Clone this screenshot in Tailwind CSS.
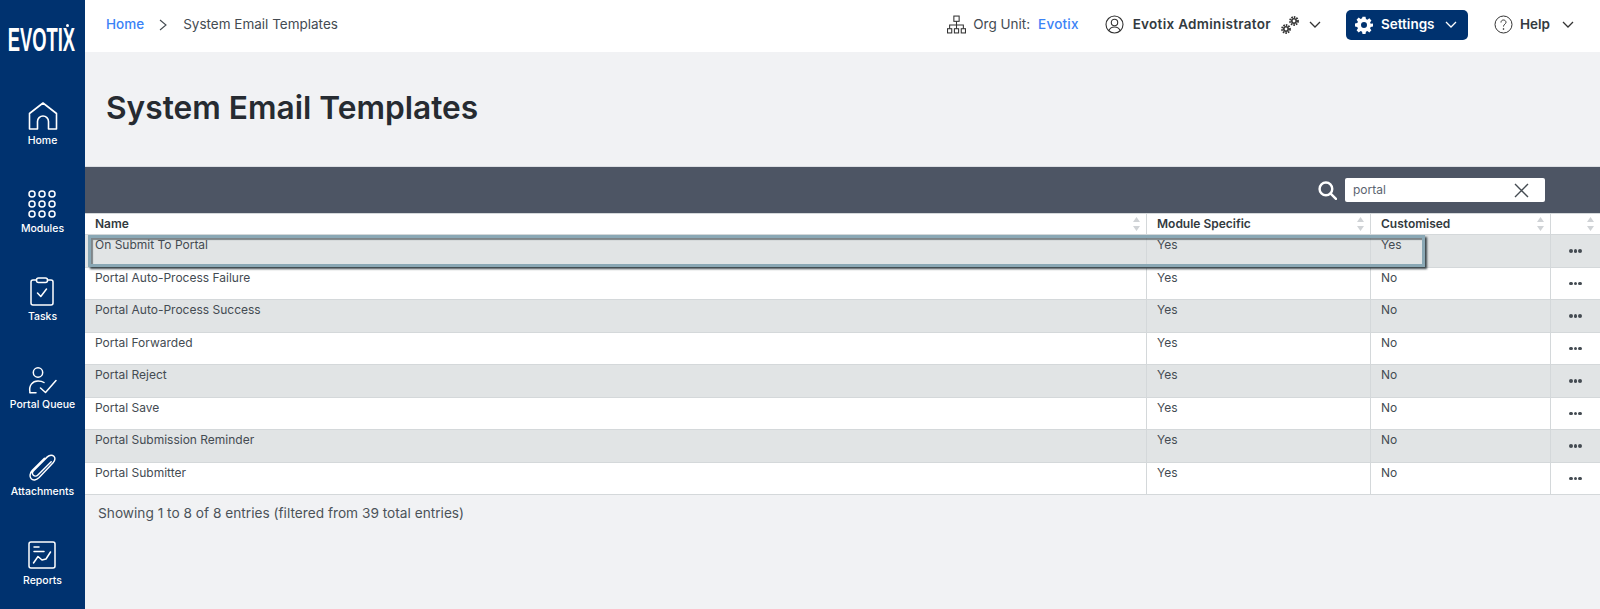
<!DOCTYPE html>
<html lang="en">
<head>
  <meta charset="UTF-8" />
  <meta name="viewport" content="width=device-width, initial-scale=1.0" />
  <title>System Email Templates</title>
  <script src="https://cdn.jsdelivr.net/npm/@tailwindcss/browser@4"></script>
</head>
<body class="bg-[#f1f2f4] font-['Inter',sans-serif] text-[#444b52] h-[609px] overflow-hidden flex">

  <!-- sidebar -->
  <aside class="w-[85px] h-[609px] shrink-0 bg-[#00326f] text-white flex flex-col items-center overflow-hidden">
    <div class="relative h-[95px] w-full shrink-0 flex justify-center pt-[17px]">
      <span class="font-['Liberation_Sans',sans-serif] font-bold text-[34px] leading-[44px] scale-x-[.54] whitespace-nowrap -translate-x-[1px]">EVOTIX</span>
      <span class="absolute left-[66px] top-[24px] w-[3px] h-[3px] rounded-full bg-white"></span>
    </div>

    <a class="h-[88px] shrink-0 flex flex-col items-center">
      <svg class="w-[30px] h-[28px] mt-[7px]" viewBox="0 0 30 28" fill="none" stroke="white" stroke-width="1.600" stroke-linejoin="round"><path d="M1.500 11.500 15 1 28.500 11.500V27H20.500V19.500A5.500 5.500 0 0 0 9.500 19.500V27H1.500Z"/></svg>
      <span class="text-[10.5px] leading-[14px] mt-[4px] font-medium">Home</span>
    </a>
    <a class="h-[88px] shrink-0 flex flex-col items-center">
      <svg class="w-[28px] h-[28px] mt-[7px]" viewBox="0 0 28 28" fill="none" stroke="white" stroke-width="1.500">
        <circle cx="4" cy="4" r="3"/><circle cx="14" cy="4" r="3"/><circle cx="24" cy="4" r="3"/>
        <circle cx="4" cy="14" r="3"/><circle cx="14" cy="14" r="3"/><circle cx="24" cy="14" r="3"/>
        <circle cx="4" cy="24" r="3"/><circle cx="14" cy="24" r="3"/><circle cx="24" cy="24" r="3"/>
      </svg>
      <span class="text-[10.5px] leading-[14px] mt-[4px] font-medium">Modules</span>
    </a>
    <a class="h-[88px] shrink-0 flex flex-col items-center">
      <svg class="w-[24px] h-[29px] mt-[6px]" viewBox="0 0 24 29" fill="none" stroke="white" stroke-width="1.500" stroke-linejoin="round" stroke-linecap="round"><path d="M6.500 3H3a2 2 0 0 0-2 2V26a2 2 0 0 0 2 2H21a2 2 0 0 0 2-2V5a2 2 0 0 0-2-2H17.500"/><rect x="6.500" y="1" width="11" height="4.500" rx="2"/><path d="M7.500 16 10.800 19.500 16.500 12"/></svg>
      <span class="text-[10.5px] leading-[14px] mt-[4px] font-medium">Tasks</span>
    </a>
    <a class="h-[88px] shrink-0 flex flex-col items-center">
      <svg class="w-[29px] h-[27px] mt-[8px]" viewBox="0 0 29 27" fill="none" stroke="white" stroke-width="1.500" stroke-linecap="round" stroke-linejoin="round"><circle cx="10" cy="5.500" r="4.700"/><path d="M2 25.500C0.500 18.500 4.500 14 10 14C12.500 14 14.500 14.500 16 15.500"/><path d="M2 25.800H8"/><path d="M12.500 21 17.500 25.500 28 13.500"/></svg>
      <span class="text-[10.5px] leading-[14px] mt-[4px] font-medium whitespace-nowrap">Portal Queue</span>
    </a>
    <a class="h-[88px] shrink-0 flex flex-col items-center">
      <svg class="w-[27px] h-[28px] mt-[6px]" viewBox="0 0 28 29" fill="none" stroke="white" stroke-width="1.500" stroke-linecap="round" stroke-linejoin="round"><path d="M23 9 9.500 22.500C7.500 24.500 5.500 24 4.500 23C3.500 22 3 20 5 18L19 4C21.500 1.500 24.500 2 25.800 3.300C27.200 4.700 27.500 7.500 25 10L10.500 25.500C7.500 28.500 4 28.500 2.300 26.800C0.500 25 0.500 21 3.500 18L16 5.500"/></svg>
      <span class="text-[10.5px] leading-[14px] mt-[4px] font-medium">Attachments</span>
    </a>
    <a class="h-[88px] shrink-0 flex flex-col items-center">
      <svg class="w-[28px] h-[28px] mt-[6px]" viewBox="0 0 28 28" fill="none" stroke="white" stroke-width="1.500" stroke-linecap="round" stroke-linejoin="round"><rect x="1" y="1" width="26" height="26" rx="2"/><path d="M6 6H11"/><path d="M6 10.500H16"/><path d="M5.500 22 10 15.500 14 19 18 18 22.500 11"/></svg>
      <span class="text-[10.5px] leading-[14px] mt-[5px] font-medium">Reports</span>
    </a>
  </aside>

  <div class="flex-1 min-w-0 relative">
    <!-- top bar -->
    <header class="h-[52px] bg-white flex items-center pl-[21px] pb-[3px] text-[13.5px]">
      <a class="text-[#3b82f6] font-medium">Home</a>
      <svg class="w-[8px] h-[12px] ml-[15px] mr-[16px]" viewBox="0 0 8 12" fill="none" stroke="#444b52" stroke-width="1.100"><path d="M1 1 7 6 1 11"/></svg>
      <span class="text-[#444b52]">System Email Templates</span>

      <div class="ml-auto flex items-center">
        <svg class="w-[19px] h-[19px]" viewBox="0 0 18 18" fill="none" stroke="#333" stroke-width="1"><rect x="6.500" y="1" width="5" height="5"/><path d="M9 6V9.500M2.500 13V9.500H15.500V13M9 9.500V13"/><rect x="0.500" y="13" width="4" height="4"/><rect x="7" y="13" width="4" height="4"/><rect x="13.500" y="13" width="4" height="4"/></svg>
        <span class="ml-[7px] text-[#444b52]">Org Unit:</span>
        <span class="ml-[8px] text-[#3b82f6] font-medium tracking-[.2px]">Evotix</span>

        <svg class="w-[19px] h-[19px] ml-[26px]" viewBox="0 0 19 19" fill="none" stroke="#333" stroke-width="1.100"><circle cx="9.500" cy="9.500" r="8.500"/><circle cx="9.500" cy="7.500" r="3.200"/><path d="M4 15.500C5 12.800 7 12 9.500 12S14 12.800 15 15.500"/></svg>
        <span class="ml-[9px] font-semibold text-[#333a40] tracking-[.3px]">Evotix Administrator</span>
        <svg class="w-[18px] h-[18px] ml-[10px]" viewBox="0 0 18 18" fill="none" stroke="#333"><circle cx="5" cy="13" r="2.200" stroke-width="1.600"/><circle cx="5" cy="13" r="4" stroke-width="1.800" stroke-dasharray="1.600 1"/><circle cx="13" cy="5" r="2.200" stroke-width="1.600"/><circle cx="13" cy="5" r="4" stroke-width="1.800" stroke-dasharray="1.600 1"/></svg>
        <svg class="w-[12px] h-[7px] ml-[10px]" viewBox="0 0 12 7" fill="none" stroke="#333" stroke-width="1.300"><path d="M1 1 6 6 11 1"/></svg>

        <button class="ml-[25px] w-[122px] h-[30px] rounded-[5px] bg-[#00326f] text-white flex items-center pl-[9px]">
          <svg class="w-[18px] h-[18px]" viewBox="0 0 24 24" fill="white"><path fill-rule="evenodd" d="M10 1h4l.6 3.100 1.900.8 2.600-1.800 2.800 2.800-1.800 2.600.8 1.900L24 10v4l-3.100.6-.8 1.900 1.800 2.600-2.800 2.800-2.600-1.800-1.900.8L14 24h-4l-.6-3.100-1.900-.8-2.600 1.800-2.800-2.800 1.800-2.600-.8-1.900L0 14v-4l3.100-.6.8-1.900-1.800-2.600 2.800-2.800 2.600 1.800 1.900-.8zM12 8a4 4 0 1 0 0 8 4 4 0 0 0 0-8z"/></svg>
          <span class="ml-[8px] font-semibold">Settings</span>
          <svg class="w-[12px] h-[7px] ml-[10px]" viewBox="0 0 12 7" fill="none" stroke="white" stroke-width="1.300"><path d="M1 1 6 6 11 1"/></svg>
        </button>

        <svg class="w-[19px] h-[19px] ml-[26px]" viewBox="0 0 19 19" fill="none" stroke="#333" stroke-width="1"><circle cx="9.500" cy="9.500" r="8.500"/><path d="M7 7.500C7 5.800 8.200 5 9.500 5S12 6 12 7.300C12 9 9.500 9.300 9.500 11.500"/><circle cx="9.500" cy="14" r=".5"/></svg>
        <span class="ml-[7px] font-semibold text-[#333a40]">Help</span>
        <svg class="w-[12px] h-[7px] ml-[12px] mr-[26px]" viewBox="0 0 12 7" fill="none" stroke="#333" stroke-width="1.300"><path d="M1 1 6 6 11 1"/></svg>
      </div>
    </header>

    <!-- title -->
    <div class="h-[115px] pl-[21px] pt-[37px] border-b border-[#dcdfe3]">
      <h1 class="text-[31.700px] leading-[38px] font-semibold text-[#262b31]">System Email Templates</h1>
    </div>

    <!-- search bar -->
    <div class="h-[46px] bg-[#4d5564] flex items-center justify-end pr-[55px]">
      <svg class="w-[19px] h-[19px] mr-[8px]" viewBox="0 0 18 18" fill="none" stroke="white" stroke-width="2.300"><circle cx="7.500" cy="7.500" r="6"/><path d="M12 12 17 17" stroke-linecap="round"/></svg>
      <div class="w-[200px] h-[24px] bg-white rounded-[2px] flex items-center pl-[8px] pr-[16px] text-[12px] text-[#5c6470]">
        <span>portal</span>
        <svg class="w-[15px] h-[15px] ml-auto" viewBox="0 0 15 15" fill="none" stroke="#444b52" stroke-width="1.400"><path d="M1 1 14 14M14 1 1 14"/></svg>
      </div>
    </div>

    <!-- table -->
    <div id="table" class="bg-white text-[12px]">
      <div class="grid grid-cols-[1062px_224px_180px_1fr] h-[22px] bg-white font-semibold text-[#333a40] border-y border-[#d4d8da]">
        <div class="relative pl-[10px] leading-[20px] border-r border-[#d4d8da]">Name<svg class="absolute right-[6px] top-[3px] w-[7px] h-[14px]" viewBox="0 0 7 14" fill="#d0d3d6"><path d="M3.500 0 7 5H0ZM3.500 14 0 9H7Z"/></svg></div>
        <div class="relative pl-[10px] leading-[20px] border-r border-[#d4d8da]">Module Specific<svg class="absolute right-[6px] top-[3px] w-[7px] h-[14px]" viewBox="0 0 7 14" fill="#d0d3d6"><path d="M3.500 0 7 5H0ZM3.500 14 0 9H7Z"/></svg></div>
        <div class="relative pl-[10px] leading-[20px] border-r border-[#d4d8da]">Customised<svg class="absolute right-[6px] top-[3px] w-[7px] h-[14px]" viewBox="0 0 7 14" fill="#d0d3d6"><path d="M3.500 0 7 5H0ZM3.500 14 0 9H7Z"/></svg></div>
        <div class="relative"><svg class="absolute right-[6px] top-[3px] w-[7px] h-[14px]" viewBox="0 0 7 14" fill="#d0d3d6"><path d="M3.500 0 7 5H0ZM3.500 14 0 9H7Z"/></svg></div>
      </div>
    </div>

    <p class="pl-[13px] pt-[8px] text-[13.700px] text-[#4b5259]">Showing 1 to 8 of 8 entries (filtered from 39 total entries)</p>

    <!-- focus outline on first row -->
    <div class="absolute left-[3px] top-[235px] w-[1337px] h-[32px] border-[3px] border-[#8aa8b5] shadow-[2px_2px_2px_rgba(40,50,55,.9),inset_2px_2px_1px_rgba(60,70,75,.6)] pointer-events-none"></div>
  </div>

  <script>
    const rows = [
      ['On Submit To Portal', 'Yes', 'Yes'],
      ['Portal Auto-Process Failure', 'Yes', 'No'],
      ['Portal Auto-Process Success', 'Yes', 'No'],
      ['Portal Forwarded', 'Yes', 'No'],
      ['Portal Reject', 'Yes', 'No'],
      ['Portal Save', 'Yes', 'No'],
      ['Portal Submission Reminder', 'Yes', 'No'],
      ['Portal Submitter', 'Yes', 'No'],
    ];
    const table = document.getElementById('table');
    rows.forEach((r, i) => {
      const row = document.createElement('div');
      row.className = 'grid grid-cols-[1062px_224px_180px_1fr] h-[32.5px] border-b border-[#d4d8da] ' + (i % 2 ? 'bg-white' : 'bg-[#e1e4e5]');
      row.innerHTML = `
        <div class="pl-[10px] pt-[2px] leading-[16px] border-r border-[#d4d8da]">${r[0]}</div>
        <div class="pl-[10px] pt-[2px] leading-[16px] border-r border-[#d4d8da]">${r[1]}</div>
        <div class="pl-[10px] pt-[2px] leading-[16px] border-r border-[#d4d8da]">${r[2]}</div>
        <div class="flex items-center justify-center gap-[1px]">
          <span class="w-[3.500px] h-[3.500px] rounded-full bg-[#444b52]"></span><span class="w-[3.500px] h-[3.500px] rounded-full bg-[#444b52]"></span><span class="w-[3.500px] h-[3.500px] rounded-full bg-[#444b52]"></span>
        </div>`;
      table.appendChild(row);
    });
  </script>
</body>
</html>
